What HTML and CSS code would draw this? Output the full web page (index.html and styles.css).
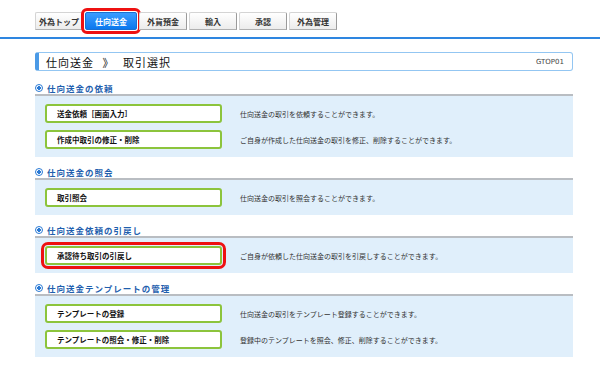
FILE: index.html
```html
<!DOCTYPE html>
<html lang="ja">
<head>
  <meta charset="UTF-8">
  <title>仕向送金 取引選択</title>
  <link rel="stylesheet" href="styles.css">
</head>
<body>
  <nav class="tabs">
    <a class="tab">外為トップ</a>
    <a class="tab active">仕向送金</a>
    <a class="tab">外貨預金</a>
    <a class="tab">輸入</a>
    <a class="tab">承認</a>
    <a class="tab">外為管理</a>
  </nav>
  <div class="rule"></div>
  <main class="page">
    <div class="title-box">
      <h1>仕向送金 》 取引選択</h1>
      <span class="screen-id">GTOP01</span>
    </div>

    <section class="section">
      <h2 class="section-head"><span class="mark"></span>仕向送金の依頼</h2>
      <div class="panel">
        <div class="row">
          <button class="menu-btn">送金依頼［画面入力］</button>
          <p class="desc">仕向送金の取引を依頼することができます。</p>
        </div>
        <div class="row">
          <button class="menu-btn">作成中取引の修正・削除</button>
          <p class="desc">ご自身が作成した仕向送金の取引を修正、削除することができます。</p>
        </div>
      </div>
    </section>

    <section class="section">
      <h2 class="section-head"><span class="mark"></span>仕向送金の照会</h2>
      <div class="panel">
        <div class="row">
          <button class="menu-btn">取引照会</button>
          <p class="desc">仕向送金の取引を照会することができます。</p>
        </div>
      </div>
    </section>

    <section class="section">
      <h2 class="section-head"><span class="mark"></span>仕向送金依頼の引戻し</h2>
      <div class="panel">
        <div class="row">
          <button class="menu-btn marked">承認待ち取引の引戻し</button>
          <p class="desc">ご自身が依頼した仕向送金の取引を引戻しすることができます。</p>
        </div>
      </div>
    </section>

    <section class="section">
      <h2 class="section-head"><span class="mark"></span>仕向送金テンプレートの管理</h2>
      <div class="panel">
        <div class="row">
          <button class="menu-btn">テンプレートの登録</button>
          <p class="desc">仕向送金の取引をテンプレート登録することができます。</p>
        </div>
        <div class="row">
          <button class="menu-btn">テンプレートの照会・修正・削除</button>
          <p class="desc">登録中のテンプレートを照会、修正、削除することができます。</p>
        </div>
      </div>
    </section>
  </main>
</body>
</html>
```

FILE: styles.css
```css
body {
  margin: 0;
  background: #fff;
  color: #222;
  font-family: "Noto Sans CJK JP", "Liberation Sans", sans-serif;
}
.tabs {
  display: flex;
  gap: 2px;
  padding: 12px 0 0 35px;
}
.tab {
  box-sizing: border-box;
  width: 48px;
  height: 18px;
  display: flex;
  align-items: center;
  justify-content: center;
  font-size: 8px;
  font-weight: bold;
  color: #333;
  background: linear-gradient(#ffffff, #ececec);
  border: 1px solid #d4d4d4;
  border-right-color: #9a9a9a;
  border-bottom-color: #b0b0b0;
  border-radius: 2px 2px 0 0;
}
.tab.active {
  width: 52px;
  color: #fff;
  background: linear-gradient(#3b9cff, #0b78ee);
  border-color: #1a6fd0;
  border-radius: 2px;
  outline: 3px solid #ee1111;
  outline-offset: 1px;
}
.rule {
  height: 2px;
  margin-top: 7px;
  background: #2e86e0;
}
.page {
  width: 538px;
  padding-left: 35px;
}
.title-box {
  box-sizing: border-box;
  height: 19px;
  margin-top: 13px;
  display: flex;
  align-items: center;
  justify-content: space-between;
  padding: 0 8px 0 7px;
  border: 1px solid #93c6f2;
  border-left: 4px solid #4b9ae6;
  border-radius: 3px;
}
.title-box h1 {
  margin: 0;
  font-size: 11px;
  font-weight: normal;
  letter-spacing: 1px;
  word-spacing: 5px;
  color: #111;
}
.screen-id {
  font-size: 7px;
  color: #444;
  font-family: "DejaVu Sans", sans-serif;
}
.section {
  margin-top: 8px;
}
.section:first-of-type {
  margin-top: 10px;
}
.section-head {
  height: 13px;
  margin: 0;
  display: flex;
  align-items: center;
  gap: 4px;
  font-size: 8.5px;
  font-weight: bold;
  letter-spacing: 1px;
  color: #1f5fae;
  border-bottom: 2px solid #b9bdc2;
}
.mark {
  box-sizing: border-box;
  width: 8px;
  height: 8px;
  border: 1.5px solid #2a7ad5;
  border-radius: 50%;
  background: radial-gradient(circle, #2a7ad5 0 1.6px, #fff 1.8px);
}
.panel {
  display: flex;
  flex-direction: column;
  gap: 7px;
  padding: 8px 10px;
  background: #e0effb;
}
.row {
  display: flex;
  align-items: center;
}
.menu-btn {
  box-sizing: border-box;
  width: 177px;
  height: 19px;
  padding: 0 0 0 10px;
  text-align: left;
  font-family: inherit;
  font-size: 7.5px;
  font-weight: bold;
  color: #111;
  background: #fff;
  border: 2px solid #8cc43c;
  border-radius: 3px;
}
.menu-btn.marked {
  outline: 3px solid #ee1111;
  outline-offset: 1px;
}
.desc {
  margin: 0 0 0 18px;
  font-size: 7px;
  color: #333;
}
```
